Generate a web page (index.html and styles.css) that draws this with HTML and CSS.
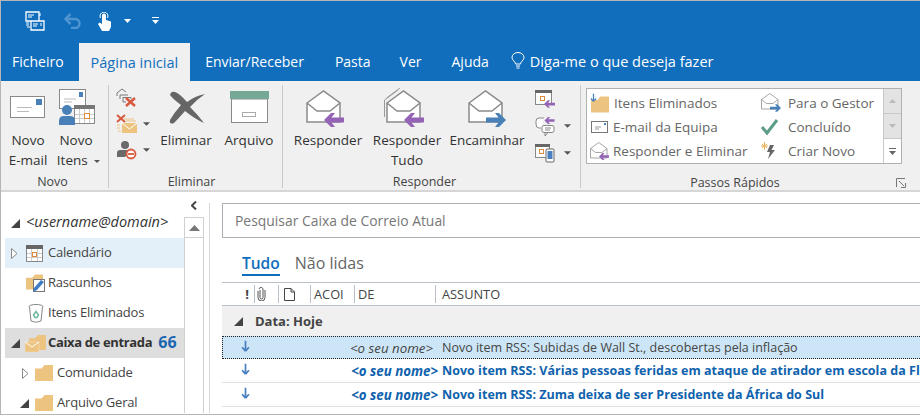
FILE: index.html
```html
<!DOCTYPE html>
<html lang="pt">
<head>
  <meta charset="UTF-8" />
  <title>Caixa de entrada - Outlook</title>
  <link rel="stylesheet" href="styles.css">
</head>
<body>
  <svg class="defs" width="0" height="0">
    <symbol id="folder" viewBox="0 0 18 16"><path d="M0 3.5 L0 16 H18 V0 H9.5 L6.5 3.5 Z" fill="#ecc480"/></symbol>
    <symbol id="open-env" viewBox="0 0 36 34">
      <path d="M1 13 L17.500 1 L34 13 V32 H1 Z" fill="#fff" stroke="#8a8a8a" stroke-width="1.500"/>
      <path d="M1 13 L11 21 H24 L34 13" fill="none" stroke="#8a8a8a" stroke-width="1.500"/>
    </symbol>
    <symbol id="arrow-left" viewBox="0 0 20 14"><path d="M7 0 H11 L7.500 4.500 H20 V9.500 H7.500 L11 14 H7 L0 7 Z" fill="#9463b5"/></symbol>
    <symbol id="arrow-right" viewBox="0 0 20 14"><path d="M13 0 H9 L12.500 4.500 H0 V9.500 H12.500 L9 14 H13 L20 7 Z" fill="#4a80b8"/></symbol>
    <symbol id="down" viewBox="0 0 10 14"><path d="M5 13 L1 8.500 M5 13 L9 8.500 M5 1 V13" fill="none" stroke="#4a80c0" stroke-width="2"/></symbol>
    <symbol id="tri-open" viewBox="0 0 9 9"><path d="M9 0 V9 H0 Z" fill="#444"/></symbol>
    <symbol id="tri-closed" viewBox="0 0 7 11"><path d="M0.500 0.500 L6 5.500 L0.500 10.500 Z" fill="#fff" stroke="#888"/></symbol>
    <symbol id="caret" viewBox="0 0 8 4"><path d="M0 0 H8 L4 4 Z" fill="#555"/></symbol>
  </svg>

  <div class="window">
    <div class="titlebar">
      <svg class="qa-send" width="20" height="20" viewBox="0 0 20 20">
        <path d="M1 1 H14 V10 H1 Z M6 10 H19 V19 H6 Z" fill="none" stroke="#fff" stroke-width="1.300"/>
        <path d="M3 4 H9 M3 6 H7 M8 13 H13 M8 15 H12 M15 2 V5 M16 12 V15 M1 12 H4 M1 14 H4 M2 16 H5" stroke="#fff"/>
      </svg>
      <svg class="qa-undo" width="18" height="16" viewBox="0 0 18 16">
        <path d="M2 6 H11 A4.500 4.500 0 0 1 11 15 H7" fill="none" stroke="#4f93cf" stroke-width="2.500"/>
        <path d="M6.500 1 L1.500 6 L6.500 11" fill="none" stroke="#4f93cf" stroke-width="2.500"/>
      </svg>
      <svg class="qa-touch" width="16" height="19" viewBox="0 0 16 19">
        <path d="M5 9 V3.500 A2 2 0 0 1 9 3.500 V8 L14 9.500 V15 L12 19 H5 L1 12 L2.500 10.500 L5 12 Z" fill="#fff"/>
        <path d="M3.500 6 A4 4 0 1 1 10.500 6" fill="none" stroke="#fff"/>
      </svg>
      <svg class="qa-caret" width="7" height="4"><path d="M0 0 H7 L3.500 4 Z" fill="#fff"/></svg>
      <svg class="qa-more" width="7" height="8"><path d="M0 0 H7 V1 H0 Z M0 3 H7 L3.500 7 Z" fill="#fff"/></svg>
    </div>

    <div class="tabs">
      <a class="tab tab-file">Ficheiro</a>
      <a class="tab tab-active">Página inicial</a>
      <a class="tab tab-send">Enviar/Receber</a>
      <a class="tab tab-folder">Pasta</a>
      <a class="tab tab-view">Ver</a>
      <a class="tab tab-help">Ajuda</a>
      <svg class="bulb" width="14" height="18" viewBox="0 0 14 18">
        <path d="M4.500 12 C4.500 9.500 1 8.500 1 5.500 A6 5 0 0 1 13 5.500 C13 8.500 9.500 9.500 9.500 12 Z M5 14 H9 M5.500 16 H8.500" fill="none" stroke="#fff"/>
      </svg>
      <a class="tab tab-tell">Diga-me o que deseja fazer</a>
    </div>

    <div class="ribbon">
      <section class="group group-new">
        <div class="group-body">
          <div class="big-btn btn-mail">
            <svg class="big-icon" width="48" height="45" viewBox="0 0 48 45">
              <rect x="6.500" y="11.500" width="34" height="21" fill="#fff" stroke="#8a8a8a"/>
              <rect x="32" y="14" width="6" height="6" fill="#4a80b8"/>
              <path d="M13 22.500 H28 M13 26.500 H25" stroke="#bbb"/>
            </svg>
            <span>Novo<br>E-mail</span>
          </div>
          <div class="big-btn btn-mail">
            <svg class="big-icon" width="48" height="45" viewBox="0 0 48 45">
              <rect x="7.500" y="4.500" width="26" height="19" fill="#fff" stroke="#8a8a8a"/>
              <rect x="27" y="7" width="4" height="5" fill="#4a80b8"/>
              <path d="M12 14 H24 M12 17 H20" stroke="#bbb"/>
              <rect x="22.500" y="20.500" width="20" height="18" fill="#fff" stroke="#888"/>
              <rect x="22" y="20" width="21" height="4" fill="#777"/>
              <path d="M27.500 24 V38 M32.500 24 V38 M37.500 24 V38 M23 29.500 H42 M23 33.500 H42" stroke="#ccc"/>
              <rect x="32.500" y="28.500" width="5" height="5" fill="#fff" stroke="#e08a3c"/>
              <circle cx="15" cy="25" r="5" fill="#4a80b8"/>
              <path d="M7 40 V36 Q7 31 12 31 H18 Q23 31 23 36 V40 Z" fill="#4a80b8"/>
            </svg>
            <span>Novo<br><span class="items-line">Itens <svg class="text-caret" width="6" height="3"><use href="#caret"/></svg></span></span>
          </div>
        </div>
        <div class="group-label label-new">Novo</div>
      </section>

      <section class="group group-delete">
        <div class="group-body">
          <div class="small-col small-col-delete">
            <div class="small-row">
              <svg width="21" height="20" viewBox="0 0 21 20">
                <path d="M1 8 V5 L6 1 L10 4 M4 11 V7 H12 M7 14 V9.500 H15 V11 M7 14 H10" fill="none" stroke="#777"/>
                <path d="M10 10 L19 18 M19 10 L10 18" stroke="#d9593f" stroke-width="2.500"/>
              </svg>
            </div>
            <div class="small-row">
              <svg width="21" height="20" viewBox="0 0 21 20">
                <path d="M6 9 H21 V19 H6 Z" fill="#ecc480"/>
                <path d="M6 9 L13.500 15 L21 9" fill="none" stroke="#fff"/>
                <path d="M8 5 H18 M10 7 H20 M1 11 H4 M1 14 H4 M2 17 H5" stroke="#ecc480"/>
                <path d="M1 1 L9 8 M9 1 L1 8" stroke="#d9593f" stroke-width="2"/>
              </svg>
              <svg class="caret" width="7" height="4"><use href="#caret"/></svg>
            </div>
            <div class="small-row">
              <svg width="21" height="20" viewBox="0 0 21 20">
                <circle cx="9" cy="5" r="4" fill="#6a6a6a"/>
                <path d="M1 17 V13 Q1 10 4 10 H14 L9 17 Z" fill="#6a6a6a"/>
                <circle cx="15" cy="14" r="4.500" fill="#fff" stroke="#d9593f" stroke-width="1.800"/>
                <path d="M12 14 H18" stroke="#d9593f" stroke-width="1.800"/>
              </svg>
              <svg class="caret" width="7" height="4"><use href="#caret"/></svg>
            </div>
          </div>
          <div class="big-btn btn-del">
            <svg class="big-icon" width="48" height="45" viewBox="0 0 48 45">
              <path d="M8 10 Q9 6 13 7 Q17 8 25 17 Q33 11 43 9 Q34 15 28 22 Q36 30 42 38 Q33 34 23 26 Q17 33 12 38 Q7 40 8 35 Q12 28 19 20 Q11 14 8 10 Z" fill="#666"/>
            </svg>
            <span>Eliminar</span>
          </div>
          <div class="big-btn btn-archive">
            <svg class="big-icon" width="48" height="45" viewBox="0 0 48 45">
              <rect x="6.500" y="14" width="36" height="23.500" fill="#fff" stroke="#8a8a8a"/>
              <rect x="5" y="6" width="39" height="8" fill="#76a896"/>
              <rect x="17.500" y="27.500" width="13" height="4" fill="#fff" stroke="#aaa"/>
            </svg>
            <span>Arquivo</span>
          </div>
        </div>
        <div class="group-label label-delete">Eliminar</div>
      </section>

      <section class="group group-respond">
        <div class="group-body">
          <div class="big-btn btn-reply">
            <svg class="big-icon" width="48" height="45" viewBox="0 0 48 45">
              <use href="#open-env" x="2" y="5" width="36" height="34"/>
              <use href="#arrow-left" x="20" y="28" width="20" height="14"/>
            </svg>
            <span>Responder</span>
          </div>
          <div class="big-btn btn-reply-all">
            <svg class="big-icon" width="48" height="45" viewBox="0 0 48 45">
              <path d="M1.500 32 V15 L15 5 M3.500 13 L17 3" fill="none" stroke="#999"/>
              <use href="#open-env" x="3" y="5" width="36" height="34"/>
              <use href="#arrow-left" x="21" y="28" width="20" height="14"/>
            </svg>
            <span>Responder<br>Tudo</span>
          </div>
          <div class="big-btn btn-forward">
            <svg class="big-icon" width="48" height="45" viewBox="0 0 48 45">
              <use href="#open-env" x="5" y="5" width="36" height="34"/>
              <use href="#arrow-right" x="23" y="28" width="20" height="14"/>
            </svg>
            <span>Encaminhar</span>
          </div>
          <div class="small-col small-col-respond">
            <div class="small-row">
              <svg width="21" height="20" viewBox="0 0 21 20">
                <rect x="0.500" y="1.500" width="16" height="14" fill="#fff" stroke="#888"/>
                <rect x="0" y="1" width="17" height="3" fill="#666"/>
                <rect x="5.500" y="7.500" width="4" height="4" fill="#fff" stroke="#e08a3c"/>
                <use href="#arrow-left" x="9" y="11" width="11" height="8"/>
              </svg>
            </div>
            <div class="small-row">
              <svg width="21" height="20" viewBox="0 0 21 20">
                <path d="M6 12 H4 Q1 12 1 8 V5 Q1 2 4 2 H9" fill="#fff" stroke="#888"/>
                <rect x="7" y="9.500" width="12" height="7" rx="2" fill="#fff" stroke="#888"/>
                <path d="M10 16.500 V20 L13 16.500 M10 12 H16 M10 14 H15" fill="none" stroke="#888"/>
                <use href="#arrow-left" x="9" y="1" width="11" height="7"/>
              </svg>
              <svg class="caret" width="7" height="4"><use href="#caret"/></svg>
            </div>
            <div class="small-row">
              <svg width="21" height="20" viewBox="0 0 21 20">
                <rect x="0.500" y="1.500" width="14" height="13" fill="#fff" stroke="#888"/>
                <rect x="0" y="1" width="15" height="3" fill="#666"/>
                <rect x="4.500" y="6.500" width="4" height="4" fill="#fff" stroke="#e08a3c"/>
                <rect x="11" y="6" width="8" height="13" rx="1" fill="#fff" stroke="#666"/>
                <rect x="12.500" y="8" width="5" height="8" fill="#4a80c0"/>
              </svg>
              <svg class="caret" width="7" height="4"><use href="#caret"/></svg>
            </div>
          </div>
        </div>
        <div class="group-label label-respond">Responder</div>
      </section>

      <section class="group group-steps">
        <div class="steps">
          <div class="steps-grid">
            <div class="step">
              <svg class="step-icon" width="21" height="20" viewBox="0 0 21 20">
                <use href="#folder" x="1" y="3" width="18" height="17"/>
                <use href="#down" x="0" y="0" width="7" height="9"/>
              </svg>
              <span>Itens Eliminados</span>
            </div>
            <div class="step step-right">
              <svg class="step-icon" width="24" height="20" viewBox="0 0 24 20">
                <use href="#open-env" x="1" y="0" width="18" height="17"/>
                <use href="#arrow-right" x="10" y="11" width="11" height="8"/>
              </svg>
              <span>Para o Gestor</span>
            </div>
            <div class="step">
              <svg class="step-icon" width="21" height="20" viewBox="0 0 21 20">
                <rect x="1.500" y="4.500" width="16" height="11" fill="#fff" stroke="#777"/>
                <rect x="14" y="6" width="2" height="2" fill="#4a80b8"/>
                <path d="M5 10 H11 M5 12 H9" stroke="#999"/>
              </svg>
              <span>E-mail da Equipa</span>
            </div>
            <div class="step step-right">
              <svg class="step-icon" width="24" height="20" viewBox="0 0 24 20">
                <path d="M2 10 L7 16 L17 3" fill="none" stroke="#5d9c87" stroke-width="3"/>
              </svg>
              <span>Concluído</span>
            </div>
            <div class="step">
              <svg class="step-icon" width="21" height="20" viewBox="0 0 21 20">
                <use href="#open-env" x="0" y="1" width="18" height="17"/>
                <use href="#arrow-left" x="9" y="12" width="10" height="7"/>
              </svg>
              <span>Responder e Eliminar</span>
            </div>
            <div class="step step-right">
              <svg class="step-icon" width="24" height="20" viewBox="0 0 24 20">
                <path d="M2 3 L7 7 M7 3 L2 7 M4.500 1 V9 M1 5 H8" stroke="#e8b45e"/>
                <path d="M14 4 H10 L7 11 H10 L8 18 L15 9 H11.500 Z" fill="#666"/>
              </svg>
              <span>Criar Novo</span>
            </div>
          </div>
          <div class="steps-scroll">
            <div class="scroll-cell"><svg width="7" height="4"><path d="M0 4 H7 L3.500 0 Z" fill="#bbb"/></svg></div>
            <div class="scroll-cell"><svg width="7" height="4"><path d="M0 0 H7 L3.500 4 Z" fill="#bbb"/></svg></div>
            <div class="scroll-cell scroll-cell-more"><svg width="7" height="7"><path d="M0 0 H7 V1 H0 Z M0 3 H7 L3.500 7 Z" fill="#666"/></svg></div>
          </div>
        </div>
        <div class="group-label group-label-steps">
          Passos Rápidos
          <svg class="launcher" width="10" height="10" viewBox="0 0 10 10"><path d="M9.500 5 V9.500 M5 9.500 H9.500 M0.500 9 V0.500 H9 M3 3 L8 8" fill="none" stroke="#777"/></svg>
        </div>
      </section>
    </div>

    <div class="main">
      <nav class="nav">
        <div class="nav-row nav-account">
          <svg class="twisty" width="9" height="9"><use href="#tri-open"/></svg>
          <span>&lt;username@domain&gt;</span>
        </div>
        <div class="nav-row nav-hover">
          <svg class="twisty twisty-closed" width="7" height="11"><use href="#tri-closed"/></svg>
          <svg class="nav-icon" width="18" height="17" viewBox="0 0 18 17">
            <rect x="0.500" y="0.500" width="16" height="16" fill="#fff" stroke="#888"/>
            <rect x="0" y="0" width="17" height="4" fill="#666"/>
            <path d="M5.500 4 V16 M11.500 4 V16 M1 8.500 H16 M1 12.500 H16" stroke="#ccc"/>
            <rect x="6.500" y="7.500" width="4" height="4" fill="#fff" stroke="#e08a3c"/>
          </svg>
          <span>Calendário</span>
        </div>
        <div class="nav-row nav-plain">
          <svg class="nav-icon" width="20" height="19" viewBox="0 0 20 19">
            <use href="#folder" x="0" y="0" width="17" height="16"/>
            <rect x="7.500" y="5.500" width="11" height="12" fill="#fff" stroke="#777"/>
            <path d="M7 18 L8 14 L15 6 L18 8 L11 16 Z" fill="#3f7cc4"/>
          </svg>
          <span>Rascunhos</span>
        </div>
        <div class="nav-row nav-plain">
          <svg class="nav-icon nav-icon-trash" width="16" height="19" viewBox="0 0 16 19">
            <ellipse cx="8" cy="2.500" rx="7" ry="2" fill="#fff" stroke="#888"/>
            <path d="M1.500 3 L3 17 Q8 19.500 13 17 L14.500 3" fill="#fff" stroke="#888"/>
            <path d="M5.500 11 L8 7.500 L10.500 11 L9 13.500 H7 Z" fill="none" stroke="#6fb79c" stroke-width="1.500"/>
          </svg>
          <span>Itens Eliminados</span>
        </div>
        <div class="nav-row nav-selected">
          <svg class="twisty" width="9" height="9"><use href="#tri-open"/></svg>
          <svg class="nav-icon nav-icon-inbox" width="21" height="17" viewBox="0 0 21 17">
            <use href="#folder" x="4" y="0" width="17" height="15"/>
            <path d="M0 7 H14 V17 H0 Z" fill="#ecc480" stroke="#f6e3c0" stroke-width="0.500"/>
            <path d="M0 7 L7 12 L14 7" fill="none" stroke="#fff"/>
          </svg>
          <strong>Caixa de entrada</strong>
          <b class="count">66</b>
        </div>
        <div class="nav-row nav-sub">
          <svg class="twisty twisty-closed" width="7" height="11"><use href="#tri-closed"/></svg>
          <svg class="nav-icon" width="18" height="16"><use href="#folder"/></svg>
          <span>Comunidade</span>
        </div>
        <div class="nav-row nav-sub">
          <svg class="twisty" width="9" height="9"><use href="#tri-open"/></svg>
          <svg class="nav-icon" width="18" height="16"><use href="#folder"/></svg>
          <span>Arquivo Geral</span>
        </div>
      </nav>

      <div class="nav-side">
        <svg class="collapse" width="6" height="9" viewBox="0 0 6 9"><path d="M5 0.500 L1 4.500 L5 8.500" fill="none" stroke="#444" stroke-width="2"/></svg>
        <div class="nav-scroll">
          <div class="nav-scroll-btn"><svg width="11" height="6"><path d="M0 6 H11 L5.500 0 Z" fill="#777"/></svg></div>
        </div>
      </div>

      <div class="panel">
        <div class="search">Pesquisar Caixa de Correio Atual</div>
        <div class="filters">
          <span class="filter filter-active">Tudo</span>
          <span class="filter">Não lidas</span>
        </div>
        <div class="columns">
          <div class="col col-flag">!</div>
          <div class="col col-clip">
            <svg width="9" height="14" viewBox="0 0 9 14"><path d="M3 3 V10.500 A1.500 1.500 0 0 0 6 10.500 V3 A2 2 0 0 0 2 2 M1 4 V10.500 A3.500 3.500 0 0 0 8 10.500 V3" fill="none" stroke="#555"/></svg>
          </div>
          <div class="col col-doc">
            <svg width="11" height="13" viewBox="0 0 11 13"><path d="M0.500 0.500 H7 L10.500 4 V12.500 H0.500 Z M7 0.500 V4 H10.500" fill="#fff" stroke="#444"/></svg>
          </div>
          <div class="col col-action">ACOI</div>
          <div class="col col-from">DE</div>
          <div class="col col-subject">ASSUNTO</div>
        </div>
        <div class="date-row">
          <svg width="9" height="9"><use href="#tri-open"/></svg>
          <strong>Data: Hoje</strong>
        </div>
        <div class="msg msg-selected">
          <svg class="msg-icon" width="9" height="12"><use href="#down"/></svg>
          <em class="msg-from">&lt;o seu nome&gt;</em>
          <span class="msg-subject">Novo item RSS: Subidas de Wall St., descobertas pela inflação</span>
        </div>
        <div class="msg msg-unread">
          <svg class="msg-icon" width="9" height="12"><use href="#down"/></svg>
          <em class="msg-from">&lt;o seu nome&gt;</em>
          <span class="msg-subject">Novo item RSS: Várias pessoas feridas em ataque de atirador em escola da Flo</span>
        </div>
        <div class="msg msg-unread">
          <svg class="msg-icon" width="9" height="12"><use href="#down"/></svg>
          <em class="msg-from">&lt;o seu nome&gt;</em>
          <span class="msg-subject">Novo item RSS: Zuma deixa de ser Presidente da África do Sul</span>
        </div>
      </div>
    </div>
  </div>
</body>
</html>
```

FILE: styles.css
```css
html, body {
  margin: 0;
  padding: 0;
  background: #fff;
}
svg {
  display: block;
  flex: none;
}
.defs {
  position: absolute;
}
.window {
  width: 919px;
  height: 413px;
  overflow: hidden;
  border-top: 1px solid #b5b5b5;
  border-left: 1px solid #b5b5b5;
  border-bottom: 1px solid #b5b5b5;
  font-family: "Open Sans", "Noto Sans", sans-serif;
  font-size: 13px;
  color: #444;
}

/* title bar */
.titlebar {
  display: flex;
  align-items: center;
  height: 40px;
  background: #106ebd;
}
.qa-send { margin-left: 24px; }
.qa-undo { margin-left: 19px; }
.qa-touch { margin-left: 15px; }
.qa-caret { margin-left: 11px; }
.qa-more { margin-left: 21px; }

/* tabs */
.tabs {
  display: flex;
  align-items: center;
  height: 40px;
  background: #106ebd;
  color: #fff;
  font-size: 14px;
}
.tab {
  white-space: nowrap;
}
.tab-file { margin-left: 11px; margin-right: 15px; }
.tab-active {
  display: flex;
  align-items: center;
  align-self: stretch;
  margin-top: 2px;
  padding: 0 12px;
  background: #f0f0f0;
  color: #106ebd;
  font-size: 14.500px;
}
.tab-send { margin-left: 15px; }
.tab-folder { margin-left: 31px; }
.tab-view { margin-left: 29px; }
.tab-help { margin-left: 30px; }
.bulb { margin-left: 22px; }
.tab-tell { margin-left: 5px; font-size: 14.500px; }

/* ribbon */
.ribbon {
  display: flex;
  height: 103px;
  padding: 4px 0 2px;
  background: #f0f0f0;
  border-bottom: 2px solid #d6d6d6;
  font-size: 13.500px;
  color: #333;
}
.group {
  display: flex;
  flex-direction: column;
  border-right: 1px solid #c8c8c8;
}
.group-new { width: 107px; }
.group-delete { width: 173px; }
.group-respond { width: 297px; }
.group-steps {
  flex: 1;
  border-right: none;
}
.group-body {
  display: flex;
  height: 88px;
}
.group-label {
  height: 15px;
  line-height: 18px;
  text-align: center;
  font-size: 12.500px;
  color: #444;
}
.label-new { padding-right: 4px; }
.label-delete { padding-right: 8px; }
.label-respond { padding-right: 14px; }
.big-btn {
  display: flex;
  flex-direction: column;
  align-items: center;
  text-align: center;
  line-height: 20px;
  white-space: nowrap;
}
.items-line {
  display: inline-block;
  margin-left: 5px;
}
.text-caret {
  display: inline-block;
  vertical-align: middle;
  margin-left: 3px;
}
.group-new .group-body { padding-left: 3px; }
.btn-mail { width: 48px; }
.btn-del { width: 72px; }
.btn-archive { width: 54px; }
.btn-reply { width: 78px; }
.btn-reply-all { width: 80px; }
.btn-forward { width: 80px; }
.group-respond .group-body { padding-left: 6px; }

.small-col {
  display: flex;
  flex-direction: column;
}
.small-col-delete {
  width: 41px;
  padding-left: 7px;
  box-sizing: border-box;
}
.small-col-respond {
  padding-left: 8px;
}
.small-row {
  display: flex;
  align-items: center;
  height: 26px;
}
.small-col-respond .small-row {
  height: 27px;
}
.caret {
  margin-left: 6px;
}
.small-col-respond .caret {
  margin-left: 8px;
}

/* quick steps */
.steps {
  display: flex;
  flex: none;
  width: 316px;
  height: 76px;
  box-sizing: border-box;
  margin: 3px 0 9px 5px;
  background: #fff;
  border: 1px solid #b0b0b0;
}
.steps-grid {
  flex: 1;
  display: grid;
  grid-template-columns: 170px 1fr;
  grid-auto-rows: 24px;
  padding-top: 2px;
  color: #666;
}
.step {
  display: flex;
  align-items: center;
  white-space: nowrap;
}
.step-icon {
  margin-left: 3px;
  margin-right: 2px;
}
.step:first-child .step-icon {
  margin-right: 3px;
}
.step-right .step-icon {
  margin-right: 4px;
}
.steps-scroll {
  display: flex;
  flex-direction: column;
  width: 17px;
  border-left: 1px solid #c8c8c8;
}
.scroll-cell {
  flex: 1;
  display: flex;
  align-items: center;
  justify-content: center;
  background: #e3e3e3;
  border-bottom: 1px solid #c8c8c8;
}
.scroll-cell-more {
  background: #fff;
  border-bottom: none;
}
.group-label-steps {
  position: relative;
  margin-top: 1px;
  padding-right: 31px;
}
.launcher {
  position: absolute;
  right: 14px;
  top: 4px;
}

/* navigation pane */
.main {
  display: flex;
  height: 221px;
}
.nav {
  width: 183px;
  flex: none;
  padding-top: 16px;
  box-sizing: border-box;
  font-size: 13px;
  letter-spacing: -0.200px;
}
.nav-row {
  display: flex;
  align-items: center;
  height: 30px;
  margin-left: 4px;
  white-space: nowrap;
}
.nav-row span,
.nav-row strong {
  margin-top: -2px;
}
.twisty {
  margin-left: 6px;
}
.nav-account {
  font-style: italic;
  font-size: 14.500px;
  letter-spacing: 0;
  color: #333;
}
.nav-account span {
  margin-top: -4px;
  margin-left: 6px;
}
.nav-hover {
  background: #e3f0f9;
}
.nav-hover .nav-icon {
  margin-left: 8px;
  margin-right: 4px;
}
.nav-plain {
  padding-left: 21px;
}
.nav-plain .nav-icon {
  margin-right: 2px;
}
.nav-plain .nav-icon-trash {
  margin-left: 2px;
  margin-right: 4px;
}
.nav-selected {
  background: #dedede;
  color: #333;
}
.nav-selected strong {
  letter-spacing: -0.350px;
}
.nav-icon-inbox {
  margin-left: 5px;
  margin-right: 2px;
}
.count {
  margin-top: -3px;
  margin-left: 6px;
  font-size: 16px;
  letter-spacing: 0;
  color: #1a66b0;
}
.nav-sub {
  padding-left: 12px;
}
.nav-sub .twisty {
  margin-left: 3px;
}
.nav-sub .twisty-closed {
  margin-left: 5px;
}
.nav-sub .nav-icon {
  margin-left: 6px;
  margin-right: 4px;
}
.nav-side {
  width: 20px;
  flex: none;
  display: flex;
  flex-direction: column;
  align-items: center;
}
.collapse {
  margin: 9px 0 7px;
}
.nav-scroll {
  flex: 1;
  width: 20px;
  box-sizing: border-box;
  border-left: 1px solid #d0d0d0;
  border-right: 1px solid #d0d0d0;
}
.nav-scroll-btn {
  display: flex;
  align-items: center;
  justify-content: center;
  height: 19px;
  border: 1px solid #d0d0d0;
  border-left: none;
  border-right: none;
}

/* message list */
.panel {
  flex: 1;
  min-width: 0;
  margin: 11px 0 0 5px;
  padding-left: 12px;
  border-left: 1px solid #d6d6d6;
}
.search {
  height: 33px;
  line-height: 33px;
  padding-left: 12px;
  margin-right: -2px;
  border: 1px solid #aab0b6;
  font-size: 13.900px;
  color: #777;
}
.filters {
  display: flex;
  gap: 15px;
  height: 44px;
  padding: 16px 0 0 20px;
  box-sizing: border-box;
  font-size: 16px;
  color: #666;
}
.filter {
  line-height: 18px;
}
.filter-active {
  height: 20px;
  font-weight: 600;
  font-size: 15.500px;
  color: #106ebd;
  border-bottom: 2px solid #106ebd;
}
.columns {
  display: flex;
  align-items: center;
  height: 22px;
  border-top: 1px solid #b9c0c8;
  border-bottom: 1px solid #b9c0c8;
  font-size: 12.800px;
  color: #444;
}
.col {
  display: flex;
  align-items: center;
  box-sizing: border-box;
  height: 18px;
  border-left: 1px solid #b9c0c8;
}
.col-flag {
  width: 32px;
  justify-content: flex-end;
  padding-right: 5px;
  border-left: none;
  font-size: 13px;
  font-weight: 700;
}
.col-clip { width: 24px; padding-left: 2px; }
.col-doc { width: 32px; padding-left: 5px; }
.col-action { width: 44px; padding-left: 3px; overflow: hidden; }
.col-from { width: 81px; padding-left: 3px; }
.col-subject { flex: 1; padding-left: 6px; }
.date-row {
  display: flex;
  align-items: center;
  gap: 12px;
  height: 30px;
  padding-left: 12px;
  background: #f0f0f0;
  font-size: 13px;
  color: #444;
}
.msg {
  display: flex;
  align-items: center;
  height: 24px;
  box-sizing: border-box;
  overflow: hidden;
  white-space: nowrap;
  border-bottom: 1px solid #e2e2e2;
  color: #444;
  font-size: 12.500px;
}
.msg-icon {
  margin-left: 19px;
  margin-top: -3px;
}
.msg-from {
  flex: none;
  width: 183px;
  box-sizing: border-box;
  text-align: right;
  font-size: 13.300px;
}
.msg-subject {
  margin-left: 9px;
}
.msg-selected {
  height: 23px;
  background: #cde6f7;
  border: 1px dotted #222;
  border-right: none;
}
.msg-selected .msg-icon {
  margin-left: 18px;
}
.msg-unread {
  color: #0f62ad;
  font-weight: 700;
}
.msg-unread .msg-from {
  width: 188px;
}
.msg-unread .msg-subject {
  margin-left: 4px;
  letter-spacing: 0.020px;
}
```
